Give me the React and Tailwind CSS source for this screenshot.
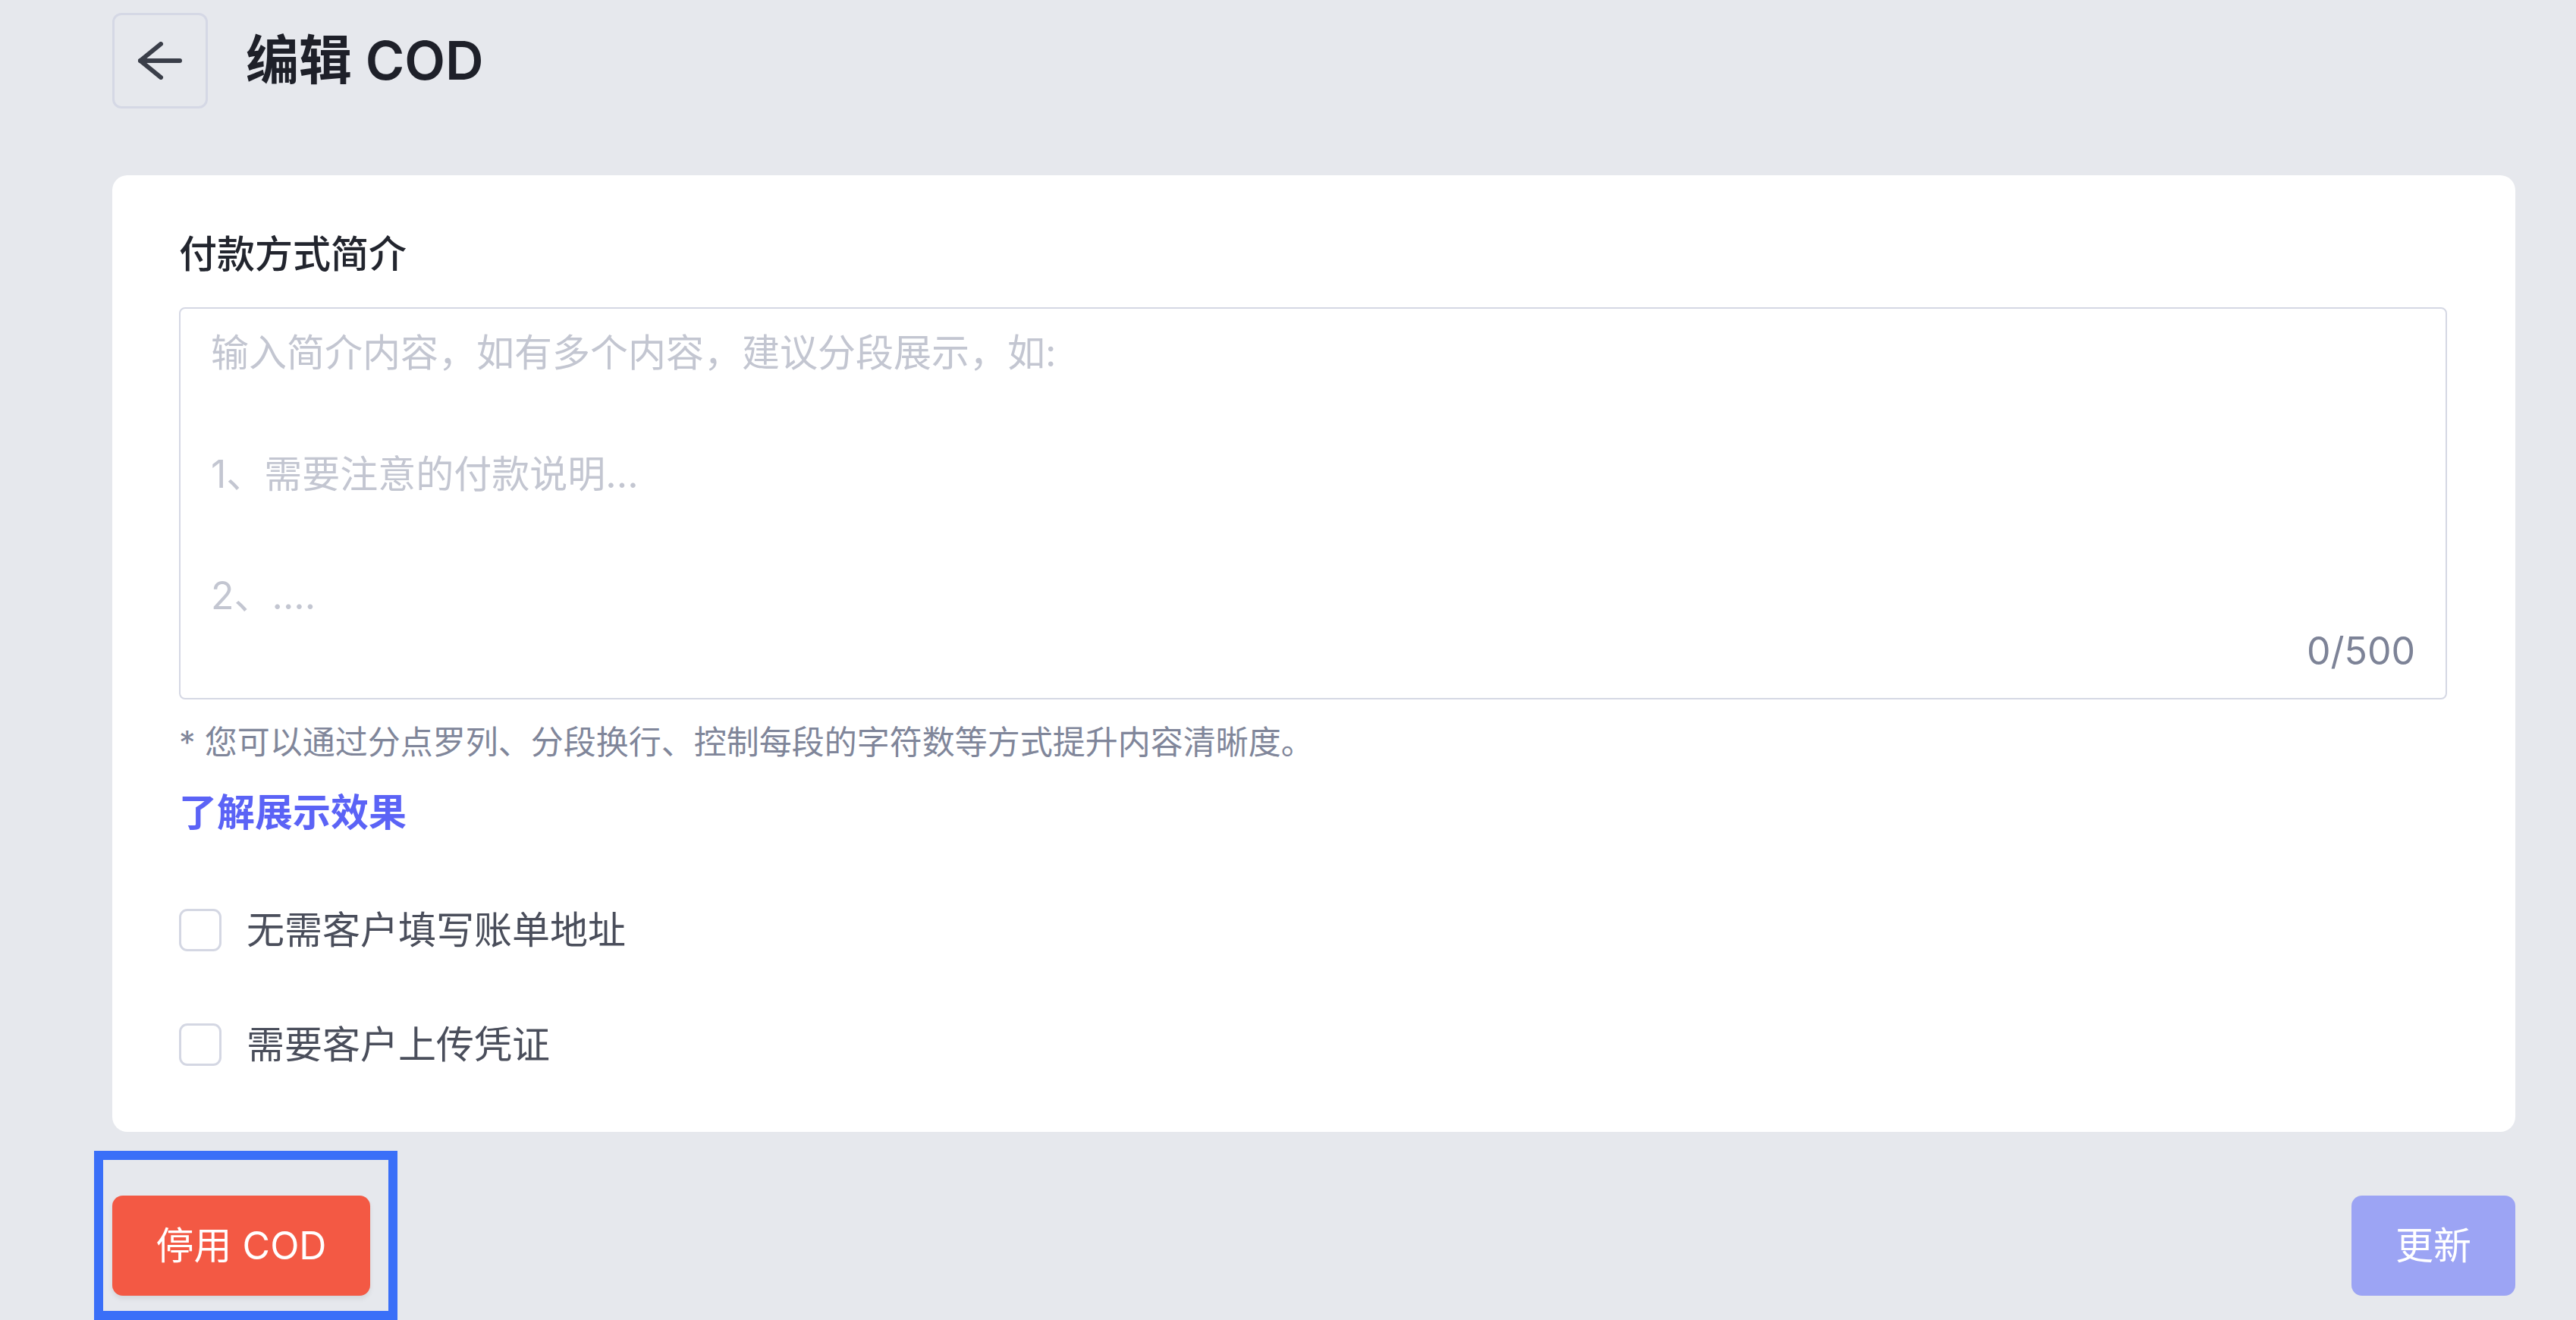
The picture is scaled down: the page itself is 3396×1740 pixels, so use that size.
import React from "react";

function BackArrow() {
  return (
    <svg width="58" height="50" viewBox="0 0 58 50" fill="none" stroke="#3a3e49" strokeWidth="6" strokeLinecap="round" strokeLinejoin="round">
      <path d="M30 3 L3 25 L30 47" />
      <path d="M3 25 H55" />
    </svg>
  );
}

function Checkbox({ label }) {
  return (
    <label className="flex h-[76px] items-center gap-[33px]">
      <span className="block h-[56px] w-[56px] shrink-0 rounded-[11px] border-[3px] border-[#d4d7e3] bg-white" />
      <span className="text-[50px] leading-[76px] text-[#4a4e5b]">{label}</span>
    </label>
  );
}

export default function App() {
  return (
    <div className="h-[1740px] w-full overflow-hidden bg-[#e6e8ed] pl-[148px] pr-[80px] pt-[17px] font-[Inter,'Noto_Sans_CJK_SC',sans-serif]">
      <header className="flex h-[126px] items-center gap-[50px]">
        <button className="flex h-[126px] w-[126px] items-center justify-center rounded-[12px] border-[3px] border-[#d5d8e5]">
          <BackArrow />
        </button>
        <h1 className="text-[70px] font-semibold leading-none text-[#1e2029]">编辑 COD</h1>
      </header>

      <main className="mt-[88px] rounded-[20px] bg-white pb-[77px] pl-[88px] pr-[90px] pt-[67px]">
        <div className="text-[50px] font-medium leading-[75px] text-[#22252e]">付款方式简介</div>

        <div className="mt-[32px] flex h-[517px] flex-col rounded-[8px] border-2 border-[#d5d8e4] px-[40px] pb-[32px] pt-[18px]">
          <div className="flex-1 text-[50px] leading-[80px] text-[#c3c6d1]">
            <div>输入简介内容，如有多个内容，建议分段展示，如:</div>
            <div>&nbsp;</div>
            <div>1、需要注意的付款说明...</div>
            <div>&nbsp;</div>
            <div>2、....</div>
          </div>
          <div className="text-right text-[50px] leading-[60px] text-[#7d8397]">0/500</div>
        </div>

        <div className="mt-[26px] text-[43px] leading-[60px] text-[#80869a]">
          * 您可以通过分点罗列、分段换行、控制每段的字符数等方式提升内容清晰度。
        </div>

        <div className="mt-[26px] text-[50px] font-semibold leading-[75px] text-[#5b63f6]">了解展示效果</div>

        <div className="mt-[79px] flex flex-col gap-[75px]">
          <Checkbox label="无需客户填写账单地址" />
          <Checkbox label="需要客户上传凭证" />
        </div>
      </main>

      <footer className="mt-[84px] flex items-start justify-between">
        <div className="relative">
          <div className="pointer-events-none absolute -left-[24px] -top-[59px] h-[223px] w-[400px] border-[12px] border-[#3a6ff8]" />
          <button className="flex h-[132px] w-[340px] items-center justify-center rounded-[14px] bg-[#f35944] text-[50px] leading-none text-white shadow-[0_4px_6px_rgba(0,0,0,0.08)]">
            停用 COD
          </button>
        </div>
        <button className="flex h-[132px] w-[216px] items-center justify-center rounded-[14px] bg-[#9ca4f4] text-[50px] leading-none text-white">
          更新
        </button>
      </footer>
    </div>
  );
}
